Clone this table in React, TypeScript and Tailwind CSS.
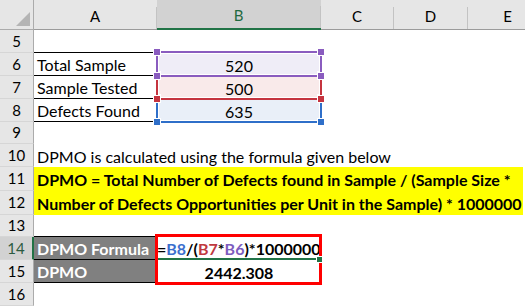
import type { ReactNode } from 'react';

type Tone = 'purple' | 'red' | 'blue';

const TONE: Record<Tone, { line: string; sq: string; fill: string; z: string }> = {
  purple: { line: 'border-[#8a5cbf]', sq: 'bg-[#8a5cbf]', fill: 'bg-[#efedf7]', z: 'z-30' },
  red: { line: 'border-[#c5343f]', sq: 'bg-[#c5343f]', fill: 'bg-[#f9eaea]', z: 'z-20' },
  blue: { line: 'border-[#2f6fc9]', sq: 'bg-[#2f6fc9]', fill: 'bg-[#e9eff8]', z: 'z-10' },
};

function ColHead({ label, w, active = false }: { label: string; w: string; active?: boolean }) {
  return (
    <div
      className={`flex ${w} shrink-0 ${
        active ? 'border-b-2 border-[#217346] bg-[#d2d2d2] text-[#1f6a40]' : 'border-b border-[#9b9b9b] bg-[#e6e6e6] text-black'
      }`}
    >
      <div className="flex flex-1 items-center justify-center pt-[3px] text-[15px]">{label}</div>
      <div className="h-[22px] w-px self-end bg-[#c3c3c3]" />
    </div>
  );
}

function Row({ n, h = 'h-[23px]', active = false, children }: { n: number; h?: string; active?: boolean; children?: ReactNode }) {
  return (
    <div className={`flex ${h}`}>
      <div
        className={`flex w-[34px] shrink-0 items-center justify-center border-b border-b-[#d6d6d6] text-[15px] ${
          active ? 'border-r-2 border-r-[#217346] bg-[#d2d2d2] text-[#2b5a40]' : 'border-r border-r-[#ababab] bg-[#e6e6e6] text-black'
        }`}
      >
        {n}
      </div>
      {children}
    </div>
  );
}

function RefCell({ tone, value, bottom = false }: { tone: Tone; value: string; bottom?: boolean }) {
  const t = TONE[tone];
  return (
    <div className={`relative flex w-[164px] shrink-0 items-center justify-center pt-[2px] ${t.fill}`}>
      {value}
      <div className={`pointer-events-none absolute -bottom-px -left-px -right-px -top-[2px] border-2 ${t.line} ${t.z} shadow-[inset_0_0_0_1px_#fff]`}>
        <span className={`absolute -left-[4px] -top-[4px] h-[6px] w-[6px] outline outline-1 outline-white ${t.sq}`} />
        <span className={`absolute -right-[4px] -top-[4px] h-[6px] w-[6px] outline outline-1 outline-white ${t.sq}`} />
        {bottom && (
          <>
            <span className={`absolute -bottom-[4px] -left-[4px] h-[6px] w-[6px] outline outline-1 outline-white ${t.sq}`} />
            <span className={`absolute -bottom-[4px] -right-[4px] h-[6px] w-[6px] outline outline-1 outline-white ${t.sq}`} />
          </>
        )}
      </div>
    </div>
  );
}

export default function App() {
  return (
    <div className="h-[306px] w-[525px] overflow-hidden bg-white font-['Lato',sans-serif] text-[16px] text-black">
      <div className="flex h-[30px]">
        <div className="w-[34px] shrink-0 border-b border-r border-[#ababab] bg-[#e6e6e6]">
          <svg width="33" height="29" viewBox="0 0 33 29">
            <polygon points="16,26 30,26 30,12" fill="#b4b4b4" />
          </svg>
        </div>
        <ColHead label="A" w="w-[123px]" />
        <ColHead label="B" w="w-[164px]" active />
        <ColHead label="C" w="w-[73px]" />
        <ColHead label="D" w="w-[74px]" />
        <ColHead label="E" w="w-[80px]" />
      </div>

      <Row n={5}>
        <div className="w-[123px] shrink-0 border-b border-black" />
      </Row>
      <Row n={6}>
        <div className="flex w-[123px] shrink-0 items-center border-b border-black px-[3px] pt-[2px]">Total Sample</div>
        <RefCell tone="purple" value="520" bottom />
      </Row>
      <Row n={7}>
        <div className="flex w-[123px] shrink-0 items-center border-b border-black px-[3px] pt-[2px]">Sample Tested</div>
        <RefCell tone="red" value="500" bottom />
      </Row>
      <Row n={8}>
        <div className="flex w-[123px] shrink-0 items-center border-b border-black px-[3px] pt-[2px]">Defects Found</div>
        <RefCell tone="blue" value="635" bottom />
      </Row>
      <Row n={9} h="h-[22px]" />
      <Row n={10}>
        <div className="flex items-center whitespace-nowrap px-[3px] pt-[2px]">DPMO is calculated using the formula given below</div>
      </Row>
      <Row n={11} h="h-[24px]">
        <div className="flex w-[489px] shrink-0 items-center whitespace-nowrap bg-[#ffff00] px-[3px] pt-[2px] font-bold">
          DPMO = Total Number of Defects found in Sample / (Sample Size *
        </div>
      </Row>
      <Row n={12} h="h-[24px]">
        <div className="flex w-[489px] shrink-0 items-center whitespace-nowrap bg-[#ffff00] px-[3px] pt-[2px] font-bold">
          Number of Defects Opportunities per Unit in the Sample) * 1000000
        </div>
      </Row>
      <Row n={13} h="h-[22px]">
        <div className="w-[123px] shrink-0 border-b border-black" />
      </Row>

      <div className="relative">
        <Row n={14} active>
          <div className="flex w-[123px] shrink-0 items-center border-b border-black bg-[#808080] px-[3px] pt-[2px] font-bold text-white">
            DPMO Formula
          </div>
          <div className="flex w-[164px] shrink-0 items-center whitespace-nowrap border-b-2 border-[#217346] pt-[2px] font-bold">
            =<span className="text-[#3b6fce]">B8</span>/(<span className="text-[#c0393f]">B7</span>*
            <span className="text-[#7d5cbf]">B6</span>)*1000000
          </div>
        </Row>
        <Row n={15}>
          <div className="flex w-[123px] shrink-0 items-center border-b border-black bg-[#808080] px-[3px] pt-[2px] font-bold text-white">
            DPMO
          </div>
          <div className="flex w-[164px] shrink-0 items-center justify-center pt-[2px] font-bold">2442.308</div>
        </Row>
        <div className="pointer-events-none absolute -top-[3px] left-[155px] z-40 h-[51px] w-[167px] border-[3px] border-[#ff0000]" />
        <span className="absolute left-[317px] top-[20px] z-50 h-[5px] w-[5px] bg-[#217346] outline outline-1 outline-white" />
      </div>

      <Row n={16} />
    </div>
  );
}
